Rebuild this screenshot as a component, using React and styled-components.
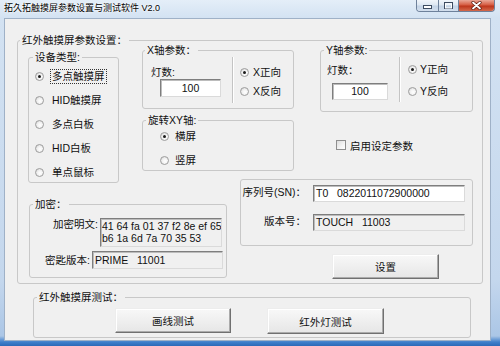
import styled, { createGlobalStyle } from "styled-components";

const GlobalStyle = createGlobalStyle`
  html, body { margin: 0; padding: 0; background: #fff; }
  body { font-family: "Liberation Sans", "Noto Sans CJK SC", sans-serif; }
  * { box-sizing: border-box; }
`;

const Window = styled.div`
  width: 500px;
  height: 346px;
  display: flex;
  flex-direction: column;
  overflow: hidden;
  background: linear-gradient(180deg, #e4eef8 0px, #d3e2f2 18px, #c4d7ed 280px, #abc6e6 336px, #3f7fcb 342px, #2b69b8 346px);
`;

const TitleBar = styled.div`
  height: 18px;
  flex: none;
  display: flex;
  align-items: flex-start;
  justify-content: space-between;
  padding: 0 5px 0 4px;
`;

const Title = styled.span`
  font-size: 9px;
  line-height: 16px;
  color: #000;
  white-space: nowrap;
  text-shadow: 0 0 3px #fff, 0 0 2px #fff;
`;

const Controls = styled.div`
  display: flex;
  height: 12px;
  border: 1px solid #6e819b;
  border-top: none;
  border-radius: 0 0 4px 4px;
  overflow: hidden;
`;

const CtrlButton = styled.div`
  width: ${p => p.$w}px;
  display: flex;
  align-items: center;
  justify-content: center;
  background: ${p => p.$close
    ? "linear-gradient(180deg, #e9a797 0%, #d65d43 45%, #bd361c 55%, #d4694c 100%)"
    : "linear-gradient(180deg, #f1f5fa 0%, #dde7f2 45%, #c3d3e6 55%, #d3dfed 100%)"};
  & + & { border-left: 1px solid #6e819b; }
`;

const Client = styled.div`
  flex: 1;
  margin: 0 9px 5px 4px;
  background: #f0f0f0;
  border: 1px solid #9fb1c7;
  padding: 15px 0 0 12px;
  font-size: 10.5px;
  color: #111;
`;

const Group = styled.fieldset`
  margin: ${p => p.$mt || 0}px 0 0 ${p => p.$ml || 0}px;
  padding: 0;
  min-width: 0;
  flex: none;
  width: ${p => p.$w}px;
  height: ${p => p.$h}px;
  border: 1px solid #c8c8c8;
  border-radius: 3px;
`;

const Legend = styled.legend`
  margin-left: ${p => p.$off}px;
  padding: 0 2px;
  font-size: 10.5px;
  line-height: 12px;
  color: #111;
  white-space: nowrap;
`;

const MainBody = styled.div`
  margin-top: -2px;
  padding-left: 10px;
`;

const Row = styled.div`
  display: flex;
  align-items: flex-start;
  margin-top: ${p => p.$mt || 0}px;
`;

const Column = styled.div`
  display: flex;
  flex-direction: column;
  align-items: flex-start;
  margin-left: ${p => p.$ml || 0}px;
`;

const RadioList = styled.div`
  display: flex;
  flex-direction: column;
  gap: ${p => p.$gap}px;
  padding: ${p => p.$top}px 0 0 ${p => p.$left}px;
`;

const RadioRow = styled.div`
  display: flex;
  align-items: center;
  height: 14px;
  gap: ${p => p.$gap}px;
`;

const RadioDot = styled.span`
  width: 9px;
  height: 9px;
  flex: none;
  border-radius: 50%;
  border: 1px solid #9d9d9d;
  background: radial-gradient(circle at 60% 60%, #ffffff 0%, #f2f2f2 45%, #cfcfcf 100%);
  display: flex;
  align-items: center;
  justify-content: center;
  &::after {
    content: "";
    width: 3px;
    height: 3px;
    border-radius: 50%;
    background: #1a1a1a;
    display: ${p => (p.$on ? "block" : "none")};
  }
`;

const RadioText = styled.span`
  padding: 0 1px;
  line-height: 13px;
  white-space: nowrap;
  outline: ${p => (p.$focus ? "1px dotted #333" : "none")};
`;

const Field = styled.div`
  width: ${p => p.$w}px;
  height: ${p => p.$h}px;
  flex: none;
  overflow: hidden;
  background: ${p => (p.$readonly ? "#f0f0f0" : "#fff")};
  border: 1px solid #dadada;
  border-top-color: #7e7e7e;
  border-left-color: #7e7e7e;
  box-shadow: inset 1px 1px 0 #bcbcbc;
  padding: 0 2px;
  line-height: ${p => p.$h - 2}px;
  text-align: ${p => (p.$center ? "center" : "left")};
  white-space: pre;
  color: #111;
`;

const CipherBox = styled(Field)`
  line-height: 12px;
  padding: 1px 0 0 1px;
`;

const CountPane = styled.div`
  width: ${p => p.$w}px;
  flex: none;
  display: flex;
  flex-direction: column;
  align-items: flex-start;
  padding: ${p => p.$top}px 0 0 ${p => p.$left}px;
`;

const CountLabel = styled.div`
  line-height: 13px;
  margin-bottom: ${p => p.$gap}px;
`;

const CountInput = styled(Field)`
  margin-left: ${p => p.$indent}px;
`;

const Separator = styled.div`
  width: 1px;
  height: ${p => p.$h}px;
  margin-top: 1px;
  flex: none;
  background: #c4c4c4;
  box-shadow: 1px 0 0 #fff;
`;

const AxisBody = styled.div`
  display: flex;
  align-items: flex-start;
`;

const CheckRow = styled.label`
  display: flex;
  align-items: center;
  gap: 4px;
  height: 14px;
  margin: 26px 0 0 16px;
`;

const CheckBox = styled.span`
  width: 10px;
  height: 10px;
  border: 1px solid #8e8e8e;
  background: linear-gradient(135deg, #dcdcdc 0%, #f4f4f4 60%, #ffffff 100%);
`;

const KeyRow = styled.div`
  display: flex;
  align-items: flex-start;
  gap: 2px;
  margin-top: ${p => p.$mt}px;
  padding-left: ${p => p.$indent}px;
`;

const FieldLabel = styled.span`
  line-height: ${p => p.$lh}px;
  white-space: nowrap;
`;

const SerialGrid = styled.div`
  display: grid;
  grid-template-columns: 65px 152px;
  grid-auto-rows: 17px;
  column-gap: 7px;
  row-gap: 12px;
  padding-top: 5px;
`;

const SerialLabel = styled.span`
  justify-self: end;
  line-height: 15px;
  white-space: nowrap;
`;

const Button = styled.button`
  width: ${p => p.$w}px;
  height: ${p => p.$h}px;
  margin: ${p => p.$mt || 0}px 0 0 ${p => p.$ml || 0}px;
  padding: 0;
  flex: none;
  font: inherit;
  font-size: 10.5px;
  color: #111;
  border: 1px solid;
  border-color: #ededed #707070 #707070 #ededed;
  box-shadow: inset -1px -1px 0 #ababab, inset 1px 1px 0 #fff;
  background: linear-gradient(180deg, #f8f8f8 0%, #efefef 50%, #e6e6e6 100%);
`;

const TestRow = styled.div`
  display: flex;
  gap: 36px;
  padding: 5px 0 0 81px;
`;

function Radio({ label, checked, focus, gap }) {
  return (
    <RadioRow $gap={gap}>
      <RadioDot $on={checked} />
      <RadioText $focus={focus}>{label}</RadioText>
    </RadioRow>
  );
}

function AxisGroup({ title, off, w, h, pane, sepH, radios }) {
  return (
    <Group $w={w} $h={h}>
      <Legend $off={off}>{title}</Legend>
      <AxisBody>
        <CountPane $w={pane.w} $top={pane.top} $left={pane.left}>
          <CountLabel $gap={pane.gap}>{pane.label}</CountLabel>
          <CountInput $w={pane.inputW} $h={pane.inputH} $indent={pane.indent} $center>100</CountInput>
        </CountPane>
        <Separator $h={sepH} />
        <RadioList $top={radios.top} $left={radios.left} $gap={radios.gap}>
          {radios.labels.map((t, i) => (
            <Radio key={t} label={t} checked={i === 0} gap={radios.textGap} />
          ))}
        </RadioList>
      </AxisBody>
    </Group>
  );
}

const deviceTypes = ["多点触摸屏", "HID触摸屏", "多点白板", "HID白板", "单点鼠标"];
const cipherLines = ["41 64 fa 01 37 f2 8e ef 65", "b6 1a 6d 7a 70 35 53"];

export default function App() {
  return (
    <>
      <GlobalStyle />
      <Window>
        <TitleBar>
          <Title>拓久拓触摸屏参数设置与测试软件 V2.0</Title>
          <Controls>
            <CtrlButton $w={21}>
              <svg width="9" height="7" viewBox="0 0 9 7">
                <rect x="0.5" y="3.5" width="8" height="3" fill="#fff" stroke="#3d4b60" />
              </svg>
            </CtrlButton>
            <CtrlButton $w={20}>
              <svg width="9" height="7" viewBox="0 0 9 7">
                <rect x="0.5" y="0.5" width="8" height="6" fill="none" stroke="#3d4b60" />
                <rect x="1.5" y="2" width="6" height="4" fill="none" stroke="#fff" />
              </svg>
            </CtrlButton>
            <CtrlButton $w={36} $close>
              <svg width="11" height="9" viewBox="0 0 11 9">
                <path d="M2 1.5 L9 7.5 M9 1.5 L2 7.5" stroke="#5a1d12" strokeWidth="3.2" strokeLinecap="round" />
                <path d="M2 1.5 L9 7.5 M9 1.5 L2 7.5" stroke="#fff" strokeWidth="1.8" strokeLinecap="round" />
              </svg>
            </CtrlButton>
          </Controls>
        </TitleBar>

        <Client>
          <Group $w={466} $h={250}>
            <Legend $off={2}>红外触摸屏参数设置：</Legend>
            <MainBody>
              <Row>
                <Group $w={91} $h={132} $mt={7}>
                  <Legend $off={4}>设备类型:</Legend>
                  <RadioList $top={6} $left={6} $gap={10}>
                    {deviceTypes.map((t, i) => (
                      <Radio key={t} label={t} checked={i === 0} focus={i === 0} gap={7} />
                    ))}
                  </RadioList>
                </Group>

                <Column $ml={23}>
                  <AxisGroup
                    title="X轴参数："
                    off={2}
                    w={152}
                    h={65}
                    pane={{ w: 89, top: 10, left: 8, gap: 0, label: "灯数:", inputW: 61, inputH: 18, indent: 9 }}
                    sepH={46}
                    radios={{ top: 9, left: 7, gap: 5, textGap: 3, labels: ["X正向", "X反向"] }}
                  />
                  <Group $w={152} $h={57} $mt={5}>
                    <Legend $off={3}>旋转XY轴:</Legend>
                    <RadioList $top={3} $left={17} $gap={10}>
                      <Radio label="横屏" checked gap={5} />
                      <Radio label="竖屏" gap={5} />
                    </RadioList>
                  </Group>
                </Column>

                <Column $ml={26}>
                  <AxisGroup
                    title="Y轴参数:"
                    off={3}
                    w={153}
                    h={68}
                    pane={{ w: 78, top: 8, left: 6, gap: 6, label: "灯数：", inputW: 56, inputH: 17, indent: 5 }}
                    sepH={45}
                    radios={{ top: 6, left: 8, gap: 8, textGap: 2, labels: ["Y正向", "Y反向"] }}
                  />
                  <CheckRow>
                    <CheckBox />
                    <span>启用设定参数</span>
                  </CheckRow>
                </Column>
              </Row>

              <Row $mt={-4}>
                <Group $w={198} $h={80} $mt={19} $ml={1}>
                  <Legend $off={3}>加密：</Legend>
                  <KeyRow $mt={8} $indent={23}>
                    <FieldLabel $lh={13}>加密明文:</FieldLabel>
                    <CipherBox $w={122} $h={29} $readonly>
                      {cipherLines.map(line => <div key={line}>{line}</div>)}
                    </CipherBox>
                  </KeyRow>
                  <KeyRow $mt={4} $indent={15}>
                    <FieldLabel $lh={18}>密匙版本:</FieldLabel>
                    <Field $w={131} $h={18} $readonly>PRIME   11001</Field>
                  </KeyRow>
                </Group>

                <Column $ml={13}>
                  <Group $w={233} $h={67}>
                    <SerialGrid>
                      <SerialLabel>序列号(SN)：</SerialLabel>
                      <Field $w={152} $h={17}>T0   0822011072900000</Field>
                      <SerialLabel>版本号：</SerialLabel>
                      <Field $w={152} $h={17} $readonly>TOUCH   11003</Field>
                    </SerialGrid>
                  </Group>
                  <Button $w={107} $h={25} $mt={8} $ml={92}>设置</Button>
                </Column>
              </Row>
            </MainBody>
          </Group>

          <Group $w={438} $h={47} $mt={7} $ml={16}>
            <Legend $off={3}>红外触摸屏测试：</Legend>
            <TestRow>
              <Button $w={116} $h={25}>画线测试</Button>
              <Button $w={117} $h={26}>红外灯测试</Button>
            </TestRow>
          </Group>
        </Client>
      </Window>
    </>
  );
}
